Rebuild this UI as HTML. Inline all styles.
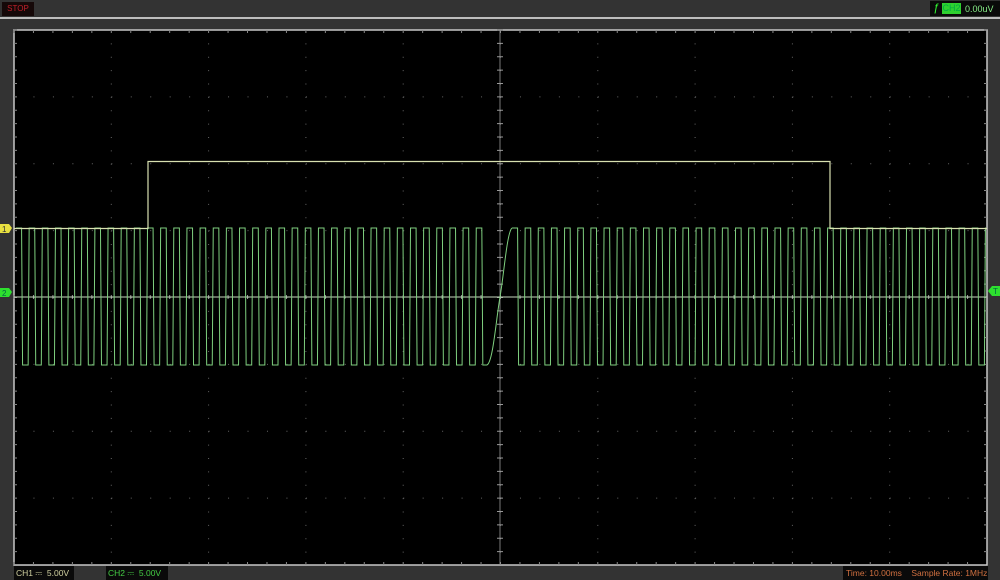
<!DOCTYPE html>
<html><head><meta charset="utf-8"><style>
html,body{margin:0;width:1000px;height:580px;background:#333;overflow:hidden;position:relative;font-family:"Liberation Sans",sans-serif;}
.b{position:absolute;background:#0a0a0a;font-size:9px;line-height:14px;white-space:nowrap;overflow:hidden;height:14px;}
</style></head><body>
<div style="position:absolute;left:0;top:17px;width:1000px;height:2px;background:#bdbdbd"></div>
<div class="b" style="left:2px;top:2px;width:32px;height:14px;background:#150808;color:#c0202a;text-align:center;font-size:8px">STOP</div>
<div class="b" style="left:930px;top:1px;width:70px;height:15px;color:#6ee06e">
 <span style="position:absolute;left:3px;top:0;color:#3f3;font-style:italic;font-size:11px">ƒ</span>
 <span style="position:absolute;left:12px;top:2px;width:19px;height:11px;background:#2fd02f;color:#0a4;line-height:11px;text-align:center;font-size:9px">CH2</span>
 <span style="position:absolute;left:35px;top:1px;color:#8e8">0.00uV</span></div>
<svg width="1000" height="580" style="position:absolute;left:0;top:0">
<rect x="14" y="30" width="973" height="535" fill="#000" stroke="#c8c8c8" stroke-width="1.5"/>
<g id="grid"></g>
<line x1="14" y1="297" x2="987" y2="297" stroke="#c8d8c0" stroke-width="1"/>
<path id="sq" fill="none" stroke="#7fd07f" stroke-width="1"/>
<path d="M14 228.5H148V161.5H830V228.5H987" fill="none" stroke="#d8e0b0" stroke-width="1.2"/>
<path d="M487 365 C493 362 496 320 500 297 C504 274 507 232 512 228" fill="none" stroke="#7fd07f"/>
<polygon points="0,224 9,224 12,228 9,233 0,233" fill="#e8e040"/>
<text x="2" y="232" font-size="8" fill="#333" font-family="Liberation Sans">1</text>
<polygon points="0,288 9,288 12,292 9,297 0,297" fill="#2ee02e"/>
<text x="2" y="296" font-size="8" fill="#064" font-family="Liberation Sans">2</text>
<polygon points="1000,286 992,286 988,291 992,296 1000,296" fill="#2ee02e"/>
<text x="993" y="294" font-size="8" fill="#064" font-family="Liberation Sans">T</text>
</svg>
<div class="b" style="left:14px;top:566px;width:60px;color:#d0d0a0;font-size:8.5px"><span style="margin-left:2px">CH1 ⎓ &nbsp;5.00V</span></div>
<div class="b" style="left:106px;top:566px;width:62px;color:#4c4;font-size:8.5px"><span style="margin-left:2px">CH2 ⎓ &nbsp;5.00V</span></div>
<div class="b" style="left:843px;top:566px;width:145px;color:#d07040;font-size:8.5px"><span style="margin-left:3px">Time: 10.00ms &nbsp;&nbsp; Sample Rate: 1MHz</span></div>
<script>
var g='',X0=14,W=973,Y0=30,H=535,dx=W/10,dy=H/8;
for(var i=1;i<10;i++){var x=X0+i*dx;for(var y=Y0;y<Y0+H;y+=dy/5)g+='<rect x="'+(x-0.5)+'" y="'+y+'" width="1" height="1" fill="#666"/>';}
for(var j=1;j<8;j++){var y=Y0+j*dy;for(var x=X0;x<X0+W;x+=dx/5)g+='<rect x="'+x+'" y="'+(y-0.5)+'" width="1" height="1" fill="#666"/>';}
for(var y=Y0;y<Y0+H;y+=dy/5){g+='<line x1="497" y1="'+y+'" x2="503" y2="'+y+'" stroke="#999"/>';g+='<line x1="14" y1="'+y+'" x2="17" y2="'+y+'" stroke="#888"/><line x1="984" y1="'+y+'" x2="987" y2="'+y+'" stroke="#888"/>';}
for(var x=X0;x<X0+W;x+=dx/5){g+='<line x1="'+x+'" y1="295" x2="'+x+'" y2="299" stroke="#999"/>';g+='<line x1="'+x+'" y1="30" x2="'+x+'" y2="33" stroke="#888"/><line x1="'+x+'" y1="562" x2="'+x+'" y2="565" stroke="#888"/>';}
g+='<line x1="500" y1="30" x2="500" y2="565" stroke="#999" stroke-width="0.8"/>';
document.getElementById('grid').innerHTML=g;
var P=13.15,hi=228,lo=365;
function seg(a,b,st){var d='M'+a+' '+(st?hi:lo);var x=a;var s=st;while(x<b){var nx=Math.min(x+P/2-1,b);d+='H'+nx;if(nx>=b)break;x=nx+1;s=!s;d+='L'+x+' '+(s?hi:lo);}return d;}
document.getElementById('sq').setAttribute('d',seg(16,487,true)+seg(512,986,true));
</script>
</body></html>
